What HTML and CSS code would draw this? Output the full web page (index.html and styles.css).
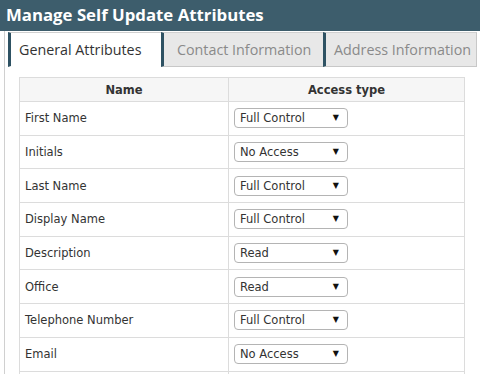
FILE: index.html
```html
<!DOCTYPE html>
<html lang="en">

<head>
    <meta charset="UTF-8">
    <meta name="viewport" content="width=device-width, initial-scale=1.0">
    <title>Manage Self Update Attributes</title>
    <link rel="stylesheet" href="styles.css">
</head>

<body>
    <div class="header">Manage Self Update Attributes</div>
    <div class="panel">
        <div class="tabs">
            <div class="tab tab-active">General Attributes</div>
            <div class="tab tab-contact">Contact Information</div>
            <div class="tab tab-address">Address Information</div>
        </div>
        <table class="attrs">
            <tr>
                <th class="col-name">Name</th>
                <th>Access type</th>
            </tr>
            <tr>
                <td>First Name</td>
                <td><span class="select">Full Control</span></td>
            </tr>
            <tr>
                <td>Initials</td>
                <td><span class="select">No Access</span></td>
            </tr>
            <tr>
                <td>Last Name</td>
                <td><span class="select">Full Control</span></td>
            </tr>
            <tr>
                <td>Display Name</td>
                <td><span class="select">Full Control</span></td>
            </tr>
            <tr>
                <td>Description</td>
                <td><span class="select">Read</span></td>
            </tr>
            <tr>
                <td>Office</td>
                <td><span class="select">Read</span></td>
            </tr>
            <tr>
                <td>Telephone Number</td>
                <td><span class="select">Full Control</span></td>
            </tr>
            <tr>
                <td>Email</td>
                <td><span class="select">No Access</span></td>
            </tr>
            <tr>
                <td></td>
                <td></td>
            </tr>
        </table>
    </div>
</body>

</html>
```

FILE: styles.css
```css
body {
    margin: 0;
    font-family: 'Open Sans', sans-serif;
    background-color: #fff;
    overflow: hidden;
}

.header {
    height: 31px;
    line-height: 30px;
    padding-left: 6px;
    background-color: #3d5d6c;
    color: #fff;
    font-size: 16.8px;
    font-weight: bold;
}

.panel {
    margin-left: 4px;
    border-left: 1px solid #d0d0d0;
    padding-left: 3px;
    height: 400px;
}

.tabs {
    display: flex;
    padding-top: 1px;
    height: 35px;
}

.tab {
    box-sizing: border-box;
    height: 35px;
    line-height: 33px;
    padding-left: 8px;
    border-left: 3px solid #2e5263;
    border-top: 1px solid #d0d0d0;
    border-bottom: 1px solid #c8c8c8;
    background-color: #e8e8e8;
    color: #8a8a8a;
    font-size: 14.3px;
    white-space: nowrap;
}

.tab-active {
    width: 153px;
    background-color: #fff;
    color: #333;
    border-bottom-color: #fff;
}

.tab-contact {
    width: 162px;
    padding-left: 13px;
}

.tab-address {
    width: 154px;
    padding-left: 8px;
    border-right: 1px solid #c8c8c8;
}

.attrs {
    margin: 10px 0 0 11px;
    width: 446px;
    border-collapse: collapse;
    font-family: 'DejaVu Sans', sans-serif;
    font-size: 11.5px;
    color: #333;
}

.attrs th,
.attrs td {
    border: 1px solid #dcdcdc;
    padding: 0 0 0 5px;
    text-align: left;
}

.attrs th {
    height: 23px;
    background-color: #f6f6f6;
    text-align: center;
    font-weight: bold;
    padding: 0;
}

.attrs .col-name {
    width: 208px;
}

.attrs td {
    height: 32.7px;
}

.select {
    display: block;
    position: relative;
    box-sizing: border-box;
    width: 114px;
    height: 20px;
    line-height: 18px;
    padding-left: 5px;
    border: 1px solid #b4b4b4;
    border-radius: 4px;
    background-color: #fff;
}

.select::after {
    content: '\25BC';
    position: absolute;
    right: 8px;
    top: 0;
    font-size: 8px;
    color: #111;
}
```
